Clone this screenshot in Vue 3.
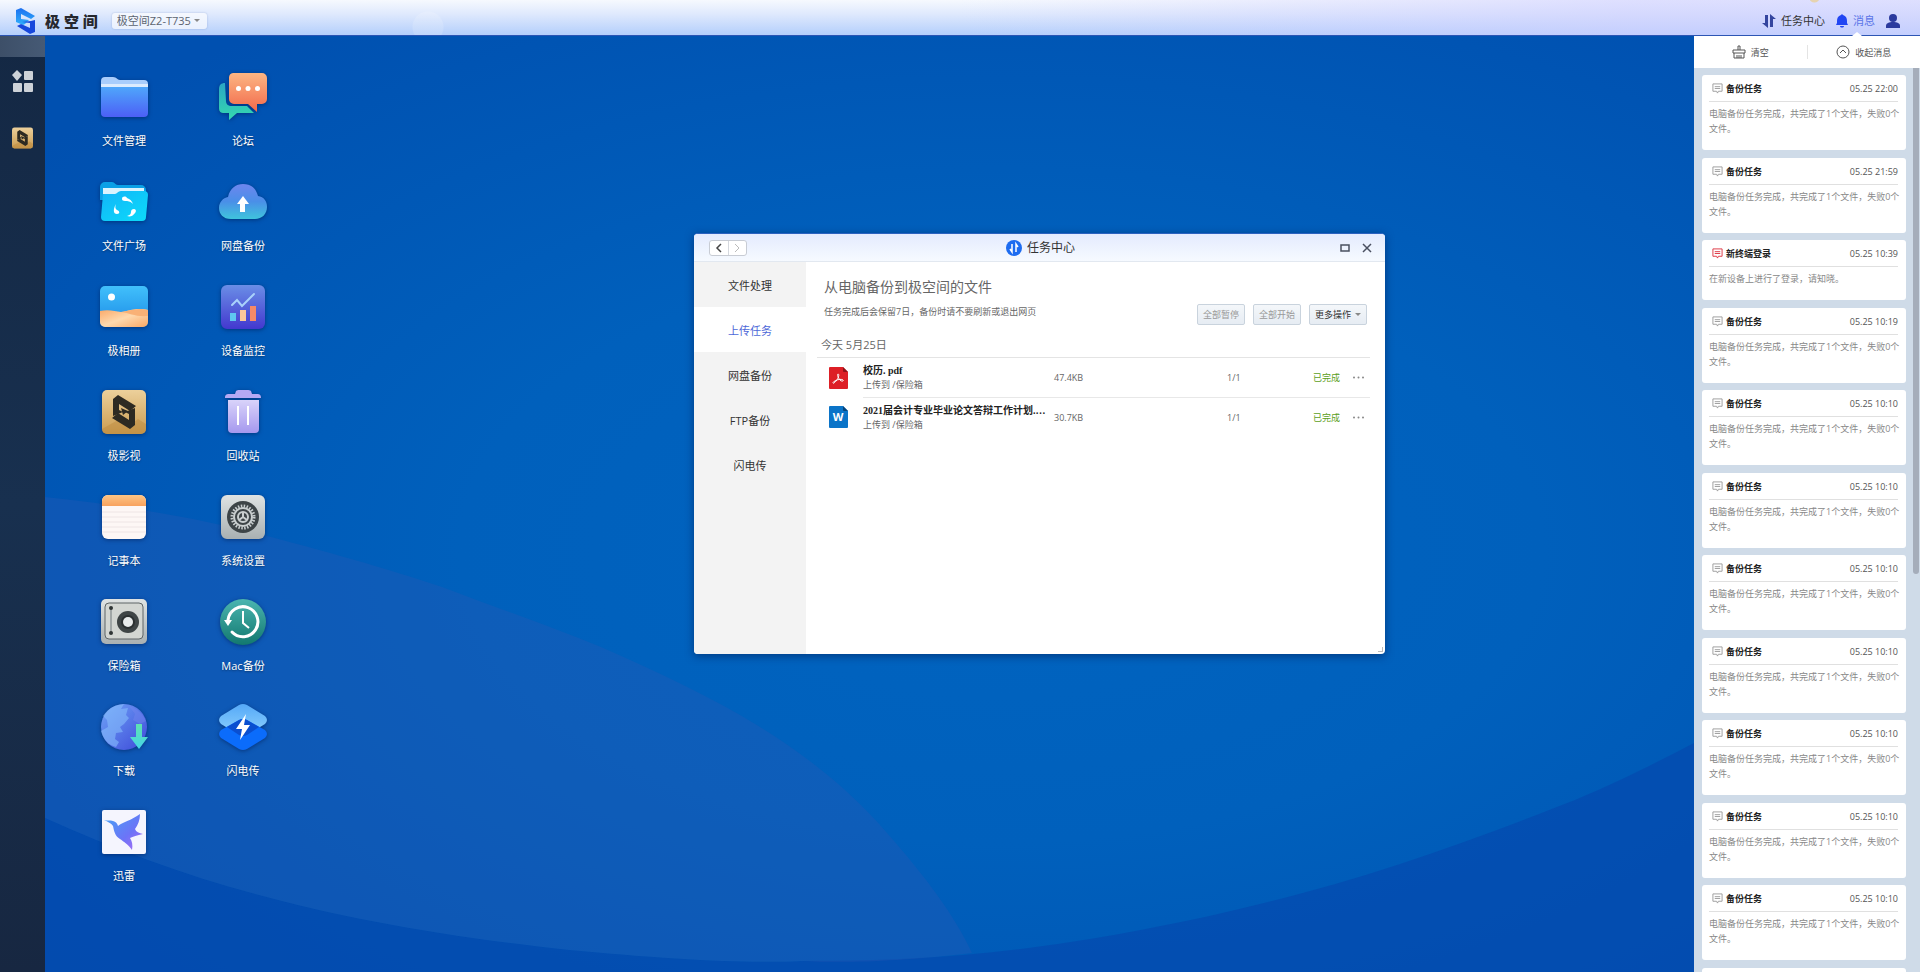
<template>
  <div class="page">
    <!-- 图标定义 -->
    <svg class="sprite" aria-hidden="true">
      <defs>
        <linearGradient id="g-folder" x1="0" y1="0" x2="0" y2="1">
          <stop offset="0" stop-color="#4fa6fb" />
          <stop offset="1" stop-color="#4c5ff6" />
        </linearGradient>
        <linearGradient id="g-orange" x1="0" y1="0" x2="0" y2="1">
          <stop offset="0" stop-color="#fcb683" />
          <stop offset="1" stop-color="#f2694b" />
        </linearGradient>
        <linearGradient id="g-green" x1="0" y1="0" x2="0" y2="1">
          <stop offset="0" stop-color="#2aa6c4" />
          <stop offset="1" stop-color="#35d9ae" />
        </linearGradient>
        <linearGradient id="g-cyan" x1="0" y1="0" x2="1" y2="1">
          <stop offset="0" stop-color="#12b4f8" />
          <stop offset="1" stop-color="#0cdcfa" />
        </linearGradient>
        <linearGradient id="g-cloud" x1="0" y1="0" x2="0" y2="1">
          <stop offset="0" stop-color="#6d86ee" />
          <stop offset="0.5" stop-color="#4a8fe8" />
          <stop offset="1" stop-color="#3fc4dc" />
        </linearGradient>
        <linearGradient id="g-sky" x1="0" y1="0" x2="0" y2="1">
          <stop offset="0" stop-color="#41c0fb" />
          <stop offset="1" stop-color="#1b8ae6" />
        </linearGradient>
        <linearGradient id="g-sand" x1="0" y1="0" x2="1" y2="1">
          <stop offset="0" stop-color="#fba765" />
          <stop offset="0.5" stop-color="#fed9ae" />
          <stop offset="1" stop-color="#f9a764" />
        </linearGradient>
        <linearGradient id="g-monitor" x1="0" y1="0" x2="0" y2="1">
          <stop offset="0" stop-color="#6a8ee6" />
          <stop offset="1" stop-color="#4338cf" />
        </linearGradient>
        <linearGradient id="g-gold" x1="0" y1="0" x2="0" y2="1">
          <stop offset="0" stop-color="#ecd09b" />
          <stop offset="1" stop-color="#cb9c50" />
        </linearGradient>
        <linearGradient id="g-trash" x1="0" y1="0" x2="0" y2="1">
          <stop offset="0" stop-color="#d9d3fa" />
          <stop offset="1" stop-color="#a598ee" />
        </linearGradient>
        <linearGradient id="g-note" x1="0" y1="0" x2="0" y2="1">
          <stop offset="0" stop-color="#fdc585" />
          <stop offset="1" stop-color="#f8a25e" />
        </linearGradient>
        <linearGradient id="g-metal" x1="0" y1="0" x2="0" y2="1">
          <stop offset="0" stop-color="#dfe3e3" />
          <stop offset="1" stop-color="#a9b0b2" />
        </linearGradient>
        <linearGradient id="g-teal" x1="0" y1="0" x2="0" y2="1">
          <stop offset="0" stop-color="#4bb5b0" />
          <stop offset="1" stop-color="#12786f" />
        </linearGradient>
        <linearGradient id="g-globe" x1="0" y1="0" x2="1" y2="1">
          <stop offset="0" stop-color="#6fa4f8" />
          <stop offset="1" stop-color="#3d49d8" />
        </linearGradient>
        <linearGradient id="g-arrow" x1="0" y1="0" x2="0" y2="1">
          <stop offset="0" stop-color="#5fe3b0" />
          <stop offset="1" stop-color="#45d3e8" />
        </linearGradient>
        <linearGradient id="g-flash" x1="0" y1="0" x2="0" y2="1">
          <stop offset="0" stop-color="#55a9f8" />
          <stop offset="1" stop-color="#8fd2fd" />
        </linearGradient>
        <linearGradient id="g-bird" x1="0" y1="0" x2="1" y2="1">
          <stop offset="0" stop-color="#46a2f5" />
          <stop offset="0.6" stop-color="#6c74f7" />
          <stop offset="1" stop-color="#b36bf5" />
        </linearGradient>
        <linearGradient id="g-logo" x1="0" y1="0" x2="0" y2="1">
          <stop offset="0" stop-color="#1c6ff0" />
          <stop offset="1" stop-color="#2fb0fb" />
        </linearGradient>
      </defs>

      <symbol id="i-folder" viewBox="0 0 48 48">
        <path d="M1 8a4 4 0 0 1 4-4h8c4 0 4 3 7 3h24a4 4 0 0 1 4 4v8H1z" fill="#a9cdfc" />
        <path d="M1 11h47v5H1z" fill="#dcebfe" />
        <path d="M1 14h47v26a4 4 0 0 1-4 4H5a4 4 0 0 1-4-4z" fill="url(#g-folder)" />
      </symbol>
      <symbol id="i-forum" viewBox="0 0 48 48">
        <path d="M6 10c-4 0-6 2-6 6v19c0 4 2 5 5 5h5v7l8-7h17l-7-7H13c-4 0-6-2-6-5z" fill="url(#g-green)" />
        <path d="M14 0h29a5 5 0 0 1 5 5v21a5 5 0 0 1-5 5h-5v8l-9-8H15a5 5 0 0 1-5-5V5a5 5 0 0 1 4-5z" fill="url(#g-orange)" />
        <g fill="#fff"><circle cx="19.500" cy="15.500" r="2.500" /><circle cx="29" cy="15.500" r="2.500" /><circle cx="38.500" cy="15.500" r="2.500" /></g>
      </symbol>
      <symbol id="i-plaza" viewBox="0 0 48 48">
        <path d="M0 9a5 5 0 0 1 5-5h7c3 0 3 3 6 3h23a5 5 0 0 1 5 5v10H0z" fill="#0aa0e6" />
        <path d="M3 10h41v12H3z" fill="#d9f3fe" />
        <path d="M3 16h12c2 0 3-3 6-3h23a4 4 0 0 1 4 4l-2 22a4 4 0 0 1-4 4H5a4 4 0 0 1-4-4z" fill="url(#g-cyan)" />
        <g fill="#fff">
          <path d="M22 21c0-3 4-3 5-1 3 1 5 3 6 6-3-3-5-3-8-3-2 0-3-1-3-2z" />
          <path d="M34 31c3 0 2 4 0 5-1 2-4 3-7 2 3-1 4-2 4-4 0-2 1-3 3-3z" />
          <path d="M16 26c-1 2-1 5 1 6 3 1 3 4 0 4-4 0-4-5-1-10z" />
        </g>
      </symbol>
      <symbol id="i-cloud" viewBox="0 0 48 48">
        <path d="M12 41C4 41 0 36 0 30s4-10 9-11C11 10 17 6 24 6c8 0 13 4 15 12 6 1 9 5 9 11 0 7-5 12-12 12z" fill="url(#g-cloud)" />
        <path d="M24 18l6 8h-4v8h-5v-8h-3z" fill="#fff" />
      </symbol>
      <symbol id="i-photo" viewBox="0 0 48 48">
        <rect y="3" width="48" height="41" rx="5" fill="url(#g-sky)" />
        <path d="M0 28c8-2 15 0 21 1 8-1 14-5 27-2v12a5 5 0 0 1-5 5H5a5 5 0 0 1-5-5z" fill="url(#g-sand)" />
        <path d="M21 29c9 1 14 5 27 4v-6c-12-3-18 1-27 2z" fill="#f9b176" />
        <circle cx="11.500" cy="14" r="3.500" fill="#fff" />
      </symbol>
      <symbol id="i-monitor" viewBox="0 0 48 48">
        <rect x="2" y="2" width="44" height="44" rx="6" fill="url(#g-monitor)" />
        <path d="M13 22l5-5 5 6 12-12" fill="none" stroke="#a9d2fb" stroke-width="2" stroke-linecap="round" />
        <path d="M11 30h6v8h-6z" fill="#5fc6f0" />
        <path d="M21 27h6v11h-6z" fill="#fbc89b" />
        <path d="M31 23h6v15h-6z" fill="#f68a68" />
      </symbol>
      <symbol id="i-movie" viewBox="0 0 48 48">
        <rect x="2" y="2" width="44" height="44" rx="5" fill="url(#g-gold)" />
        <path d="M2 41l16-9 10 7 10-8 8 5v5a5 5 0 0 1-5 5H7a5 5 0 0 1-5-5z" fill="#b98539" opacity="0.4" />
        <g fill="#2d2a22">
          <path d="M13 11l5-4 18 11-6 5-11-7v6l4 2-10 4z" />
          <path d="M35 37l-5 4-18-11 6-5 11 7v-6l-4-2 10-4z" />
          <path d="M21 20l7 3-5 4z" />
        </g>
      </symbol>
      <symbol id="i-trash" viewBox="0 0 48 48">
        <path d="M17 3c1-1 2-1 3-1h8c2 0 3 0 4 1l1 3h5c3 0 4 1 4 4H6c0-3 1-4 4-4h6z" fill="#b5a9f4" />
        <path d="M9 12h31v29a4 4 0 0 1-4 4H13a4 4 0 0 1-4-4z" fill="url(#g-trash)" />
        <path d="M19 18v19M29 18v19" stroke="#fff" stroke-width="2" />
      </symbol>
      <symbol id="i-note" viewBox="0 0 48 48">
        <rect x="2" y="2" width="44" height="44" rx="6" fill="#fdf7f5" />
        <path d="M2 13V8a6 6 0 0 1 6-6h32a6 6 0 0 1 6 6v5z" fill="url(#g-note)" />
        <path d="M2 19h44M2 24h44M2 29h44M2 34h44M2 39h44" stroke="#eee5e5" />
      </symbol>
      <symbol id="i-setting" viewBox="0 0 48 48">
        <rect x="2" y="2" width="44" height="44" rx="6" fill="url(#g-metal)" />
        <circle cx="24" cy="24" r="16" fill="#3d4447" />
        <circle cx="24" cy="24" r="11" fill="none" stroke="#c9cecf" stroke-width="3" stroke-dasharray="1.5 1.4" />
        <circle cx="24" cy="24" r="9" fill="none" stroke="#c9cecf" stroke-width="2" />
        <circle cx="24" cy="24" r="5" fill="none" stroke="#c9cecf" stroke-width="2" />
        <path d="M24 24v-5M24 24l-4 3M24 24l4 3" stroke="#c9cecf" stroke-width="2" />
      </symbol>
      <symbol id="i-safe" viewBox="0 0 48 48">
        <rect x="1" y="1" width="46" height="45" rx="5" fill="url(#g-metal)" />
        <rect x="5" y="5" width="38" height="36" rx="4" fill="#d3d6d2" stroke="#5f6566" />
        <path d="M11 10v25" stroke="#a0a6a6" stroke-width="2" />
        <circle cx="11" cy="10" r="2" fill="#2f3435" />
        <circle cx="11" cy="35" r="2" fill="#2f3435" />
        <circle cx="28" cy="24" r="11" fill="#3f4546" />
        <circle cx="28" cy="24" r="7" fill="#2b3031" />
        <circle cx="28" cy="24" r="5" fill="#e8ebeb" />
      </symbol>
      <symbol id="i-mac" viewBox="0 0 48 48">
        <circle cx="24" cy="24" r="23" fill="url(#g-teal)" />
        <path d="M13 34a15 15 0 1 0-4-12" fill="none" stroke="#fff" stroke-width="3" stroke-linecap="round" />
        <path d="M5 22h8l-4 6z" fill="#fff" />
        <path d="M24 13v12l6 5" fill="none" stroke="#fff" stroke-width="2" />
      </symbol>
      <symbol id="i-download" viewBox="0 0 48 48">
        <circle cx="24" cy="24" r="23" fill="url(#g-globe)" />
        <path d="M3 13C9 4 16 2 24 1l-3 5 7-1-2 7 3 3-5 6-4 3 3 5-7 1-1 6 4 3-3 5C8 42 3 36 1 28l7-4-1-7z" fill="#86bdfb" opacity="0.6" />
        <path d="M29 3c8 2 14 8 17 15l-6 3-7-4 2-6z" fill="#6f86ee" opacity="0.5" />
        <path d="M36 21h6v13h6l-9 12-9-12h6z" fill="url(#g-arrow)" />
      </symbol>
      <symbol id="i-flash" viewBox="0 0 48 48">
        <path d="M20 2q4-2 8 0l18 11q4 4 0 8L28 32q-4 2-8 0L2 21q-4-4 0-8z" fill="url(#g-flash)" />
        <path d="M20 17q4-2 8 0l18 10q4 4 0 8L28 46q-4 2-8 0L2 35q-4-4 0-8z" fill="#0b6cfb" />
        <path d="M8 24l12-7q4-2 8 0l12 7-12 8q-4 2-8 0z" fill="#0a4fd0" />
        <path d="M27 11L17 26h6l-2 11 10-15h-6z" fill="#fff" />
      </symbol>
      <symbol id="i-xunlei" viewBox="0 0 48 48">
        <rect x="2" y="2" width="44" height="44" rx="2" fill="#f5f5fe" />
        <path d="M4 12c4 1 6 0 9 1s4 2 5 5c5-4 14-6 22-12 0 6-2 11-5 15 1 3 4 4 8 5-6 1-10 3-13 4 2 3 3 7 2 12-4-6-8-8-12-11-5-3-6-8-7-13-2-3-5-4-9-6z" fill="url(#g-bird)" />
      </symbol>
      <symbol id="i-transfer" viewBox="0 0 14 14">
        <path d="M3 1h3v13L0 9h3zM8 0l6 5h-3v8H8z" />
      </symbol>
      <symbol id="i-msg" viewBox="0 0 12 12">
        <path d="M1 1h10v8H7l-1 2-1-2H1zM3 4h6M3 6h6" fill="none" stroke="currentColor" />
      </symbol>
    </svg>

    <header class="topbar">
      <svg class="logo" viewBox="0 0 20 26">
        <path d="M0 2l5-2 14 8-4 3-10-5v5l8 1-4 4-2 1-7-3z" fill="url(#g-logo)" />
        <path d="M19 24l-5 2-13-8 4-2 9 4v-5l-8-1 9-1 4-1z" fill="#1747dc" />
      </svg>
      <h1 class="brand">极 空 间</h1>
      <label class="device">
        <select aria-label="设备">
          <option>极空间Z2-T735</option>
        </select>
        <span class="caret"></span>
      </label>
      <nav class="top-nav">
        <button class="nav-btn">
          <svg class="nav-icon" fill="#34459f"><use href="#i-transfer" /></svg>
          <span>任务中心</span>
        </button>
        <button class="nav-btn active">
          <svg class="nav-icon bell" viewBox="0 0 12 14">
            <path d="M6 0l1 1c3 1 4 3 4 6v2l1 2H0l1-2V7c0-3 1-5 4-6zM4 12h4c0 2-4 2-4 0z" fill="#2146f3" />
          </svg>
          <span>消息</span>
        </button>
        <button class="nav-btn" aria-label="用户">
          <svg class="nav-icon" viewBox="0 0 14 14">
            <circle cx="7" cy="4" r="4" fill="#2b3a9e" />
            <path d="M0 14v-2c0-3 3-4 7-4s7 1 7 4v2z" fill="#2b3a9e" />
          </svg>
        </button>
      </nav>
    </header>

    <div class="main">
      <aside class="dock">
        <div class="dock-top"></div>
        <button class="dock-btn" aria-label="全部应用">
          <svg viewBox="0 0 21 22" fill="#cdd2d8">
            <path d="M5 0l5 5-5 6-5-6z" />
            <rect x="12" y="1" width="9" height="9" rx="1" />
            <rect x="1" y="13" width="9" height="9" rx="1" />
            <rect x="12" y="13" width="9" height="9" rx="1" />
          </svg>
        </button>
        <button class="dock-btn" aria-label="极影视">
          <svg viewBox="2 2 44 44"><use href="#i-movie" width="48" height="48" /></svg>
        </button>
      </aside>

      <main class="desktop">
        <svg class="wallpaper" viewBox="0 0 1649 936" preserveAspectRatio="none" aria-hidden="true">
          <path d="M0 782C150 850 300 890 524 914C620 923 700 928 757 925C900 925 1000 915 1160 881C1300 850 1400 815 1530 764C1580 743 1620 722 1649 707V936H0z" fill="#0548ad" fill-opacity="0.65" />
          <path d="M0 461C70 468 140 480 207 496C280 515 340 532 397 551C455 573 510 592 556 611C615 637 670 663 715 691C770 725 810 760 842 797C880 840 910 880 927 917C850 926 800 927 757 925C700 928 620 923 524 914C300 890 150 850 0 782z" fill="#2858b4" fill-opacity="0.35" />
        </svg>

        <div class="app-grid">
          <a v-for="app in apps" :key="app.name" class="app" href="#" @click.prevent>
            <svg class="app-icon"><use :href="'#i-' + app.icon" /></svg>
            <span>{{ app.name }}</span>
          </a>
        </div>

        <section class="window">
          <div class="win-bar">
            <div class="win-nav">
              <button aria-label="后退">
                <svg viewBox="0 0 8 10"><path d="M6 1L2 5l4 4" fill="none" stroke="#444" stroke-width="1.500" /></svg>
              </button>
              <button aria-label="前进">
                <svg viewBox="0 0 8 10"><path d="M2 1l4 4-4 4" fill="none" stroke="#bbb" /></svg>
              </button>
            </div>
            <h2 class="win-title">
              <svg viewBox="0 0 16 16">
                <circle cx="8" cy="8" r="8" fill="#1d6cf0" />
                <path d="M6 4v8L4 9M10 12V4l2 3" fill="none" stroke="#fff" stroke-width="1.500" />
              </svg>
              <span>任务中心</span>
            </h2>
            <div class="win-ctrl">
              <button aria-label="最大化">
                <svg viewBox="0 0 10 10"><path d="M1 2h8v6H1z" fill="none" stroke="#4a5060" stroke-width="1.500" /></svg>
              </button>
              <button aria-label="关闭">
                <svg viewBox="0 0 10 10"><path d="M1 1l8 8M9 1L1 9" stroke="#4a5060" stroke-width="1.500" /></svg>
              </button>
            </div>
          </div>

          <div class="win-body">
            <nav class="tabs">
              <button v-for="tab in tabs" :key="tab" :class="{ active: tab === currentTab }" @click="currentTab = tab">
                {{ tab }}
              </button>
            </nav>

            <div class="content">
              <div class="content-head">
                <div class="intro">
                  <h3>从电脑备份到极空间的文件</h3>
                  <p>任务完成后会保留7日，备份时请不要刷新或退出网页</p>
                </div>
                <div class="actions">
                  <button disabled>全部暂停</button>
                  <button disabled>全部开始</button>
                  <button>更多操作<i class="caret"></i></button>
                </div>
              </div>
              <div class="date">今天 5月25日</div>
              <table class="tasks">
                <colgroup>
                  <col class="c-icon" />
                  <col />
                  <col class="c-size" />
                  <col class="c-count" />
                  <col class="c-status" />
                  <col class="c-more" />
                </colgroup>
                <tbody>
                  <tr v-for="task in tasks" :key="task.name">
                    <td class="file-cell">
                      <svg class="file-icon" viewBox="0 0 19 22">
                        <path d="M1 0h13l5 5v16a1 1 0 0 1-1 1H1a1 1 0 0 1-1-1V1a1 1 0 0 1 1-1z" :fill="task.type === 'pdf' ? '#dd1f26' : '#0b74c8'" />
                        <path d="M14 0l5 5h-4a1 1 0 0 1-1-1z" :fill="task.type === 'pdf' ? '#8f1218' : '#07457c'" />
                        <path v-if="task.type === 'pdf'" d="M9 7c2 0 0 6-4 9-1 1-2-1 1-2 3-2 7-2 8-1s-1 2-3 0c-2-2-3-6-2-6z" fill="none" stroke="#fff" />
                        <text v-else x="9" y="15" text-anchor="middle" class="word">W</text>
                      </svg>
                    </td>
                    <td>
                      <div class="file-name">{{ task.name }}</div>
                      <div class="file-path">上传到 /保险箱</div>
                    </td>
                    <td>{{ task.size }}</td>
                    <td>1/1</td>
                    <td class="done">已完成</td>
                    <td>
                      <button class="more" aria-label="更多">
                        <svg viewBox="0 0 13 3" fill="#888"><circle cx="2" cy="1.500" r="1" /><circle cx="6.500" cy="1.500" r="1" /><circle cx="11" cy="1.500" r="1" /></svg>
                      </button>
                    </td>
                  </tr>
                </tbody>
              </table>
            </div>
          </div>
          <span class="resize"></span>
        </section>
      </main>

      <aside class="messages">
        <div class="msg-bar">
          <button>
            <svg viewBox="0 0 14 14"><path d="M6 5V1h2v4M1 5h12v3H1zM2 8v5h10V8M5 13v-3M7 13v-3M9 13v-3" fill="none" stroke="#555" /></svg>
            <span>清空</span>
          </button>
          <button>
            <svg viewBox="0 0 14 14"><circle cx="7" cy="7" r="6" fill="none" stroke="#555" /><path d="M4 8l3-3 3 3" fill="none" stroke="#555" /></svg>
            <span>收起消息</span>
          </button>
        </div>
        <div class="msg-wrap">
          <div class="msg-list">
            <article v-for="(msg, index) in messages" :key="index" class="card">
              <div class="card-head">
                <svg class="msg-icon" :class="{ alert: msg.alert }"><use href="#i-msg" /></svg>
                <h4>{{ msg.title }}</h4>
                <time>{{ msg.time }}</time>
              </div>
              <p>{{ msg.text }}</p>
            </article>
          </div>
          <div class="track"><div class="thumb"></div></div>
        </div>
      </aside>
    </div>
  </div>
</template>

<script setup>
import { ref } from 'vue'

const apps = [
  { name: '文件管理', icon: 'folder' },
  { name: '论坛', icon: 'forum' },
  { name: '文件广场', icon: 'plaza' },
  { name: '网盘备份', icon: 'cloud' },
  { name: '极相册', icon: 'photo' },
  { name: '设备监控', icon: 'monitor' },
  { name: '极影视', icon: 'movie' },
  { name: '回收站', icon: 'trash' },
  { name: '记事本', icon: 'note' },
  { name: '系统设置', icon: 'setting' },
  { name: '保险箱', icon: 'safe' },
  { name: 'Mac备份', icon: 'mac' },
  { name: '下载', icon: 'download' },
  { name: '闪电传', icon: 'flash' },
  { name: '迅雷', icon: 'xunlei' },
]

const tabs = ['文件处理', '上传任务', '网盘备份', 'FTP备份', '闪电传']
const currentTab = ref('上传任务')

const tasks = [
  { name: '校历. pdf', type: 'pdf', size: '47.4KB' },
  { name: '2021届会计专业毕业论文答辩工作计划.…', type: 'doc', size: '30.7KB' },
]

const backupText = '电脑备份任务完成，共完成了1个文件，失败0个文件。'
const backup = (time) => ({ title: '备份任务', time, text: backupText })

const messages = [
  backup('05.25 22:00'),
  backup('05.25 21:59'),
  { title: '新终端登录', time: '05.25 10:39', text: '在新设备上进行了登录，请知晓。', alert: true },
  backup('05.25 10:19'),
  ...Array.from({ length: 8 }, () => backup('05.25 10:10')),
]
</script>

<style>
body {
  margin: 0;
}
</style>

<style scoped>
.page {
  display: flex;
  flex-direction: column;
  height: 100vh;
  overflow: hidden;
  font-family: 'Open Sans', 'Noto Sans CJK SC', sans-serif;
  font-size: 11px;
  color: #333;
}

button {
  border: 0;
  padding: 0;
  background: none;
  font: inherit;
  color: inherit;
  cursor: pointer;
}

h1,
h2,
h3,
h4,
p {
  margin: 0;
  font-weight: 400;
}

svg {
  display: block;
}

.sprite {
  position: absolute;
  width: 0;
  height: 0;
}

.caret {
  border: 3px solid transparent;
  border-top-color: #888;
  border-bottom: 0;
}

/* 顶栏 */
.topbar {
  display: flex;
  align-items: center;
  height: 36px;
  box-sizing: border-box;
  padding: 6px 20px 0 16px;
  border-bottom: 1px solid #2c55b4;
  background:
    radial-gradient(circle at 428px 27px, rgba(255, 255, 255, 0.15) 15px, transparent 16px),
    radial-gradient(circle at 94.5% -3px, #e6d3b0 5px, transparent 6px),
    linear-gradient(90deg, rgba(206, 206, 255, 0) 50%, rgba(206, 206, 255, 0.6) 85%),
    linear-gradient(#f6f9fe, #dfe9fd 40%, #b4cffc);
}

.logo {
  width: 20px;
  height: 26px;
}

.brand {
  margin-left: 9px;
  font-size: 15px;
  font-weight: 900;
  line-height: 20px;
  color: #26282e;
}

.device {
  position: relative;
  display: flex;
  align-items: center;
  margin-left: 14px;
}

.device select {
  appearance: none;
  height: 16px;
  padding: 0 15px 0 5px;
  border: 0;
  border-radius: 3px;
  background: rgba(255, 255, 255, 0.65);
  box-shadow: 0 0 2px rgba(80, 110, 170, 0.4);
  font: inherit;
  line-height: 16px;
  color: #5c6470;
}

.device .caret {
  position: absolute;
  right: 7px;
}

.top-nav {
  display: flex;
  gap: 11px;
  margin-left: auto;
}

.nav-btn {
  display: flex;
  align-items: center;
  gap: 5px;
  line-height: 16px;
}

.nav-btn.active {
  position: relative;
  color: #5a74e8;
}

.nav-btn.active::after {
  content: '';
  position: absolute;
  top: 19px;
  left: 16px;
  border: 5px solid transparent;
  border-top: 0;
  border-bottom: 4px solid #fff;
}

.nav-icon {
  width: 14px;
  height: 14px;
}

.bell {
  width: 12px;
}

.main {
  flex: 1;
  display: flex;
  min-height: 0;
}

/* 左侧任务栏 */
.dock {
  display: flex;
  flex-direction: column;
  align-items: center;
  width: 45px;
  background: linear-gradient(#142844, #18304f 50%, #172741);
}

.dock-top {
  width: 100%;
  height: 21px;
  background: linear-gradient(90deg, #3d4f68, #465a75);
}

.dock-btn {
  margin-top: 13px;
  margin-bottom: 22px;
}

.dock-btn svg {
  width: 21px;
  height: 22px;
}

/* 桌面 */
.desktop {
  position: relative;
  flex: 1;
  background: radial-gradient(ellipse at 58% 55%, #0064c0 0%, #0060bc 40%, #0050b0 90%);
}

.wallpaper {
  position: absolute;
  width: 100%;
  height: 100%;
}

.app-grid {
  position: relative;
  display: grid;
  grid-template-columns: 80px 80px;
  gap: 29px 39px;
  width: max-content;
  padding: 37px 39px;
}

.app {
  display: flex;
  flex-direction: column;
  align-items: center;
  gap: 12px;
  line-height: 16px;
  color: #fff;
  text-decoration: none;
  text-shadow: 0 1px 2px rgba(0, 0, 0, 0.4);
}

.app-icon {
  width: 48px;
  height: 48px;
  filter: drop-shadow(0 1px 2px rgba(0, 20, 70, 0.5));
}

/* 任务中心窗口 */
.window {
  position: absolute;
  top: 197px;
  left: 649px;
  display: flex;
  flex-direction: column;
  width: 691px;
  height: 421px;
  box-sizing: border-box;
  border-top: 1px solid #2b62c0;
  border-radius: 4px;
  overflow: hidden;
  background: #fff;
  box-shadow: 0 2px 8px rgba(0, 20, 70, 0.5);
}

.win-bar {
  display: grid;
  grid-template-columns: 1fr auto 1fr;
  align-items: center;
  height: 27px;
  padding: 0 13px 0 15px;
  border-bottom: 1px solid #e2e8f0;
  background: linear-gradient(#e4ebfe, #f6faff);
}

.win-nav {
  display: flex;
  width: 38px;
  height: 16px;
  box-sizing: border-box;
  border: 1px solid #c8ccd4;
  border-radius: 3px;
  background: #fff;
}

.win-nav button {
  flex: 1;
  display: flex;
  align-items: center;
  justify-content: center;
}

.win-nav button + button {
  border-left: 1px solid #d5d8de;
}

.win-nav svg {
  width: 8px;
  height: 10px;
}

.win-title {
  display: flex;
  align-items: center;
  gap: 5px;
  font-size: 12px;
  line-height: 16px;
}

.win-title svg {
  width: 16px;
  height: 16px;
}

.win-ctrl {
  display: flex;
  justify-content: flex-end;
  gap: 12px;
}

.win-ctrl svg {
  width: 10px;
  height: 10px;
}

.win-body {
  flex: 1;
  display: flex;
}

.tabs {
  display: flex;
  flex-direction: column;
  width: 112px;
  background: #f3f3f3;
}

.tabs button {
  height: 45px;
}

.tabs .active {
  background: #fff;
  color: #4d68d8;
}

.content {
  flex: 1;
  min-width: 0;
  padding: 15px 15px 0 11px;
  color: #666;
}

.content-head {
  display: flex;
  justify-content: space-between;
  height: 48px;
  padding: 0 3px 0 7px;
}

.intro h3 {
  font-size: 14px;
  line-height: 20px;
}

.intro p {
  margin-top: 8px;
  font-size: 9px;
  line-height: 14px;
}

.actions {
  display: flex;
  align-items: flex-end;
  gap: 8px;
}

.actions button {
  display: flex;
  align-items: center;
  gap: 4px;
  height: 21px;
  padding: 0 5px;
  border: 1px solid #c9d3dd;
  border-radius: 2px;
  background: linear-gradient(#f4f7fa, #e6ecf3);
  font-size: 9px;
  color: #333;
}

.actions button:disabled {
  color: #999;
}

.date {
  margin: 12px 0 4px 4px;
  line-height: 16px;
}

.tasks {
  width: 100%;
  table-layout: fixed;
  border-spacing: 0;
  border-top: 1px solid #e4e4e4;
  font-size: 9px;
}

.c-icon {
  width: 46px;
}

.c-size {
  width: 173px;
}

.c-count {
  width: 86px;
}

.c-status {
  width: 39px;
}

.c-more {
  width: 18px;
}

.tasks td {
  height: 39px;
  padding: 0;
}

.tasks tr + tr td:not(.file-cell) {
  border-top: 1px solid #e8e8e8;
}

.file-icon {
  width: 19px;
  height: 22px;
  margin-left: 12px;
}

.word {
  font-size: 11px;
  font-weight: 700;
  fill: #fff;
}

.file-name {
  font-family: 'Liberation Serif', 'Noto Sans CJK SC', serif;
  font-size: 10px;
  font-weight: 700;
  line-height: 15px;
  color: #222;
}

.file-path {
  line-height: 14px;
}

.done {
  color: #5c9e1a;
}

.more {
  display: block;
}

.more svg {
  width: 13px;
  height: 3px;
}

.resize {
  position: absolute;
  right: 2px;
  bottom: 2px;
  width: 4px;
  height: 4px;
  border-right: 1px solid #bbb;
  border-bottom: 1px solid #bbb;
}

/* 消息面板 */
.messages {
  display: flex;
  flex-direction: column;
  width: 226px;
  background: #cfdbe8;
  font-size: 9px;
}

.msg-bar {
  display: flex;
  height: 32px;
  align-items: center;
  background: #fff;
}

.msg-bar button {
  flex: 1;
  display: flex;
  align-items: center;
  justify-content: center;
  gap: 5px;
  color: #555;
}

.msg-bar button + button {
  border-left: 1px solid #e4e4e4;
}

.msg-bar svg {
  width: 14px;
  height: 14px;
}

.msg-wrap {
  flex: 1;
  display: flex;
  min-height: 0;
}

.msg-list {
  flex: 1;
  overflow: hidden;
  padding: 7px 7px 0 8px;
}

.card {
  margin-bottom: 8px;
  padding: 0 5px 14px 7px;
  border-radius: 3px;
  background: #fff;
}

.card:nth-child(even) {
  margin-bottom: 7px;
}

.card-head {
  display: flex;
  align-items: center;
  gap: 3px;
  height: 26px;
  margin-right: 3px;
  padding-left: 3px;
  border-bottom: 1px solid #e0e0e0;
}

.msg-icon {
  width: 11px;
  height: 11px;
  color: #999;
}

.msg-icon.alert {
  color: #dc2f3c;
}

.card h4 {
  font-weight: 700;
  color: #222;
}

.card time {
  margin-left: auto;
  color: #555;
}

.card p {
  padding-top: 4px;
  line-height: 15px;
  color: #888;
}

.track {
  width: 7px;
}

.thumb {
  width: 6px;
  height: 56%;
  border-radius: 0 0 3px 3px;
  background: #a5adba;
}
</style>
